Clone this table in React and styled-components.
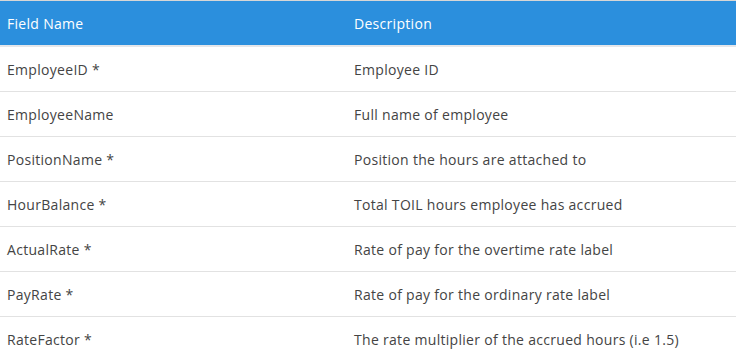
import React from "react";
import styled, { createGlobalStyle } from "styled-components";

const GlobalStyle = createGlobalStyle`
  body {
    margin: 0;
    background: #ffffff;
    font-family: "Open Sans", "Noto Sans", sans-serif;
  }
`;

const fields = [
  { name: "EmployeeID *", description: "Employee ID" },
  { name: "EmployeeName", description: "Full name of employee" },
  { name: "PositionName *", description: "Position the hours are attached to" },
  { name: "HourBalance *", description: "Total TOIL hours employee has accrued" },
  { name: "ActualRate *", description: "Rate of pay for the overtime rate label" },
  { name: "PayRate *", description: "Rate of pay for the ordinary rate label" },
  {
    name: "RateFactor *",
    description: "The rate multiplier of the accrued hours (i.e 1.5)",
  },
];

const App = () => {
  return (
    <>
      <GlobalStyle />
      <Table>
        <colgroup>
          <col style={{ width: 347 }} />
          <col />
        </colgroup>
        <thead>
          <HeadRow>
            <HeadCell>Field Name</HeadCell>
            <HeadCell>Description</HeadCell>
          </HeadRow>
        </thead>
        <tbody>
          {fields.map((field, key) => (
            <Row key={key}>
              <Cell>{field.name}</Cell>
              <Cell>{field.description}</Cell>
            </Row>
          ))}
        </tbody>
      </Table>
    </>
  );
};

export default App;

const Table = styled.table`
  width: 736px;
  table-layout: fixed;
  border-collapse: collapse;
  border-top: 1px solid #d6d6d6;
  font-size: 14px;
  letter-spacing: 0.3px;
`;

const HeadRow = styled.tr`
  background-color: #2b8fdd;
  border-bottom: 2px solid #e4e6ea;
`;

const HeadCell = styled.th`
  height: 44px;
  padding: 0 0 0 7px;
  text-align: left;
  font-weight: 400;
  color: #ffffff;
  white-space: nowrap;
`;

const Row = styled.tr`
  border-bottom: 1px solid #e2e2e2;
  &:last-child {
    border-bottom: none;
  }
`;

const Cell = styled.td`
  height: 44px;
  padding: 0 0 0 7px;
  color: #444444;
  white-space: nowrap;
  overflow: hidden;
`;
